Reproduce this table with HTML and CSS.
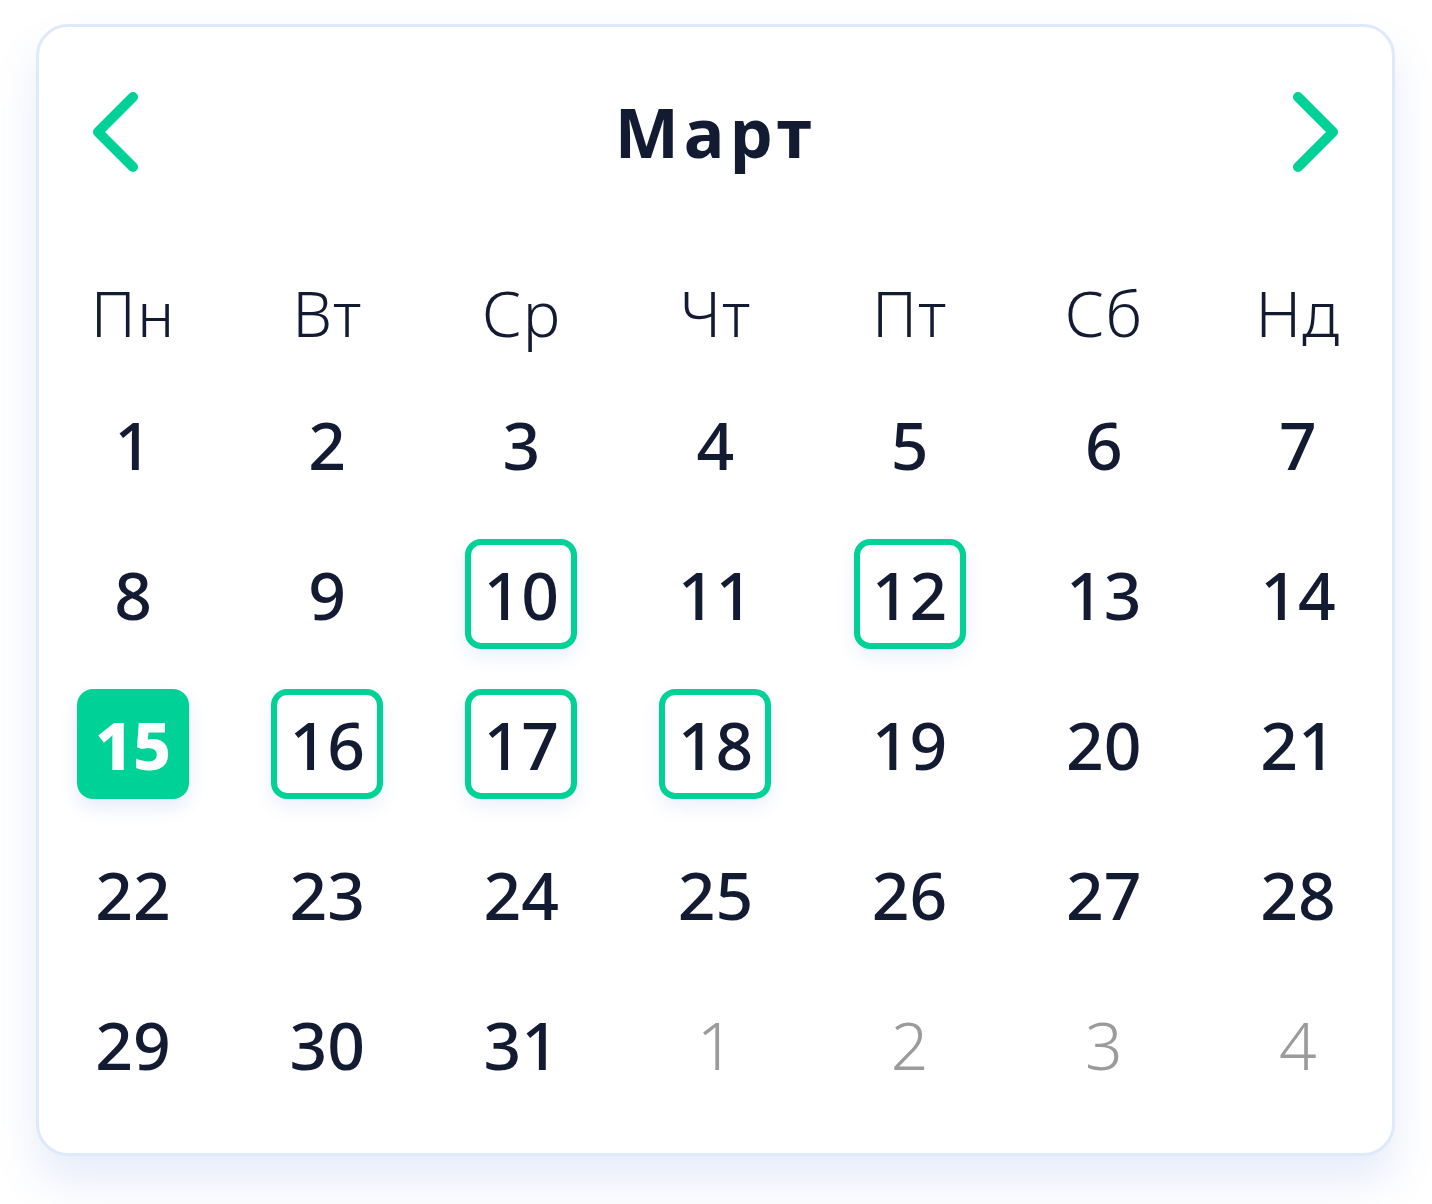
FILE: index.html
```html
<!DOCTYPE html>
<html lang="bg">
<head>
    <meta charset="UTF-8">
    <meta name="viewport" content="width=device-width, initial-scale=1.0">
    <title>Календар</title>
    <link rel="stylesheet" href="styles.css">
</head>
<body>
    <div class="calendar">
        <div class="cal-header">
            <button class="nav-btn" type="button" aria-label="Предишен месец">
                <svg width="46" height="80" viewBox="0 0 46 80"><polyline points="41,5 6,40 41,75" fill="none" stroke="#00d196" stroke-width="10" stroke-linecap="round" stroke-linejoin="round"/></svg>
            </button>
            <h2 class="month">Март</h2>
            <button class="nav-btn" type="button" aria-label="Следващ месец">
                <svg width="46" height="80" viewBox="0 0 46 80"><polyline points="5,5 40,40 5,75" fill="none" stroke="#00d196" stroke-width="10" stroke-linecap="round" stroke-linejoin="round"/></svg>
            </button>
        </div>

        <div class="cal-grid">
            <div class="wd">Пн</div>
            <div class="wd">Вт</div>
            <div class="wd">Ср</div>
            <div class="wd">Чт</div>
            <div class="wd">Пт</div>
            <div class="wd">Сб</div>
            <div class="wd">Нд</div>

            <div class="day"><span>1</span></div>
            <div class="day"><span>2</span></div>
            <div class="day"><span>3</span></div>
            <div class="day"><span>4</span></div>
            <div class="day"><span>5</span></div>
            <div class="day"><span>6</span></div>
            <div class="day"><span>7</span></div>

            <div class="day"><span>8</span></div>
            <div class="day"><span>9</span></div>
            <div class="day"><span class="marked">10</span></div>
            <div class="day"><span>11</span></div>
            <div class="day"><span class="marked">12</span></div>
            <div class="day"><span>13</span></div>
            <div class="day"><span>14</span></div>

            <div class="day"><span class="today">15</span></div>
            <div class="day"><span class="marked">16</span></div>
            <div class="day"><span class="marked">17</span></div>
            <div class="day"><span class="marked">18</span></div>
            <div class="day"><span>19</span></div>
            <div class="day"><span>20</span></div>
            <div class="day"><span>21</span></div>

            <div class="day"><span>22</span></div>
            <div class="day"><span>23</span></div>
            <div class="day"><span>24</span></div>
            <div class="day"><span>25</span></div>
            <div class="day"><span>26</span></div>
            <div class="day"><span>27</span></div>
            <div class="day"><span>28</span></div>

            <div class="day"><span>29</span></div>
            <div class="day"><span>30</span></div>
            <div class="day"><span>31</span></div>
            <div class="day other"><span>1</span></div>
            <div class="day other"><span>2</span></div>
            <div class="day other"><span>3</span></div>
            <div class="day other"><span>4</span></div>
        </div>
    </div>
</body>
</html>
```

FILE: styles.css
```css
body { margin: 0; padding-bottom: 48px; background: #fff; font-family: "Noto Sans", "DejaVu Sans", sans-serif; color: #131b33; }

.calendar { box-sizing: border-box; width: 1359px; height: 1132px; margin: 24px 0 0 36px; background: #fff; border: 3px solid #dfe9fc; border-radius: 32px; box-shadow: 0 26px 44px rgba(70, 110, 220, 0.13); }

.cal-header { display: flex; align-items: center; justify-content: space-between; height: 86px; margin-top: 62px; padding: 0 53px; }
.nav-btn { display: flex; padding: 0; border: none; background: none; cursor: pointer; }
.month { margin: 0; font-size: 68px; font-weight: 700; line-height: 1; letter-spacing: 5px; }

.cal-grid { display: grid; grid-template-columns: repeat(7, 1fr); grid-template-rows: 76px repeat(5, 112px); row-gap: 38px; margin: 99px -3px 0; }

.wd { display: flex; align-items: center; justify-content: center; font-size: 63px; font-weight: 300; letter-spacing: 1px; }

.day { display: flex; align-items: center; justify-content: center; font-size: 66px; font-weight: 500; }
.day span { display: flex; align-items: center; justify-content: center; box-sizing: border-box; width: 112px; height: 110px; border-radius: 16px; }
.day .marked { border: 6px solid #00d196; box-shadow: 0 8px 18px rgba(70, 110, 220, 0.1); }
.day .today { background: #00d196; color: #fff; font-weight: 800; box-shadow: 0 8px 18px rgba(70, 110, 220, 0.14); }
.day.other { color: #9b9b9b; font-weight: 300; }
```
